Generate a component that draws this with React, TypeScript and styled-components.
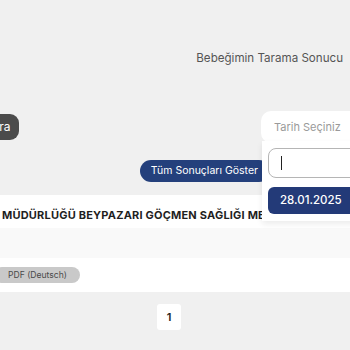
import React from 'react';
import styled, { createGlobalStyle } from 'styled-components';

const GlobalStyle = createGlobalStyle`
  html, body {
    margin: 0;
    padding: 0;
    background: #f0f0f0;
    overflow: hidden;
  }
  body {
    font-family: Inter, "Noto Sans", sans-serif;
  }
`;

const Page = styled.div`
  position: relative;
  width: 350px;
  height: 350px;
  overflow: hidden;
  background: #f0f0f0;
  display: flex;
  flex-direction: column;
`;

const Title = styled.div`
  margin-top: 50px;
  padding-right: 7px;
  text-align: right;
  font-size: 11.6px;
  line-height: 16px;
  color: #555;
`;

const FilterRow = styled.div`
  margin-top: 45px;
  height: 32px;
  display: flex;
  align-items: center;
  justify-content: space-between;
`;

const SearchButton = styled.div`
  margin-left: -17px;
  height: 26px;
  padding: 0 8px;
  border-radius: 9px;
  background: #4b4b4b;
  color: #fff;
  font-size: 12px;
  line-height: 26px;
`;

const DateInput = styled.div`
  margin-right: -21px;
  width: 110px;
  height: 32px;
  box-sizing: border-box;
  padding-left: 13px;
  border-radius: 10px 0 0 10px;
  background: #fff;
  color: #9a9a9a;
  font-size: 11px;
  line-height: 32px;
`;

const ActionRow = styled.div`
  margin-top: 17px;
  display: flex;
  justify-content: flex-end;
  padding-right: 80px;
`;

const ShowAllButton = styled.div`
  height: 22px;
  padding: 0 12px 0 11px;
  border-radius: 11px;
  background: #24407c;
  color: #fff;
  font-size: 10.5px;
  line-height: 22px;
  white-space: nowrap;
`;

const Table = styled.div`
  margin-top: 13px;
  display: flex;
  flex-direction: column;
`;

const Row = styled.div<{ $shade?: boolean; $height: number }>`
  height: ${p => p.$height}px;
  background: ${p => (p.$shade ? '#f9f9f9' : '#fff')};
  display: flex;
  align-items: center;
  white-space: nowrap;
`;

const HeaderCell = styled.div`
  padding: 6px 0 0 2px;
  font-size: 11px;
  font-weight: 700;
  color: #1f1f1f;
  letter-spacing: 0.2px;
`;

const PdfPill = styled.div`
  margin-left: -6px;
  height: 16px;
  padding: 0 13px 0 14px;
  border-radius: 8px;
  background: #c9c9c9;
  color: #4a4a4a;
  font-size: 8.6px;
  line-height: 16px;
`;

const Pagination = styled.div`
  padding-top: 12px;
  display: flex;
  justify-content: center;
  padding-right: 12px;
`;

const PageBox = styled.div`
  width: 24px;
  height: 26px;
  border-radius: 3px;
  background: #fff;
  color: #222;
  font-size: 11px;
  font-weight: 600;
  line-height: 26px;
  text-align: center;
`;

const Dropdown = styled.div`
  position: absolute;
  left: 262px;
  top: 141px;
  width: 130px;
  height: 80px;
  box-sizing: border-box;
  padding: 7px 0 0 6px;
  background: #fff;
  box-shadow: 0 3px 6px rgba(0, 0, 0, 0.08);
  display: flex;
  flex-direction: column;
  gap: 9px;
`;

const SearchField = styled.div`
  height: 30px;
  box-sizing: border-box;
  border: 1px solid #b5b5b5;
  border-radius: 8px;
  padding-left: 12px;
  display: flex;
  align-items: center;
`;

const Caret = styled.span`
  width: 1px;
  height: 14px;
  background: #222;
`;

const Option = styled.div`
  height: 27px;
  padding-left: 12px;
  border-radius: 6px 0 0 6px;
  background: #233a78;
  color: #fff;
  font-size: 11.5px;
  font-weight: 500;
  line-height: 27px;
`;

export default function App() {
  return (
    <Page>
      <GlobalStyle />
      <Title>Bebeğimin Tarama Sonucu</Title>
      <FilterRow>
        <SearchButton>Ara</SearchButton>
        <DateInput>Tarih Seçiniz</DateInput>
      </FilterRow>
      <ActionRow>
        <ShowAllButton>Tüm Sonuçları Göster</ShowAllButton>
      </ActionRow>
      <Table>
        <Row $height={33}>
          <HeaderCell>MÜDÜRLÜĞÜ BEYPAZARI GÖÇMEN SAĞLIĞI MERKEZİ</HeaderCell>
        </Row>
        <Row $height={30} $shade />
        <Row $height={34}>
          <PdfPill>PDF (Deutsch)</PdfPill>
        </Row>
      </Table>
      <Pagination>
        <PageBox>1</PageBox>
      </Pagination>
      <Dropdown>
        <SearchField>
          <Caret />
        </SearchField>
        <Option>28.01.2025</Option>
      </Dropdown>
    </Page>
  );
}
